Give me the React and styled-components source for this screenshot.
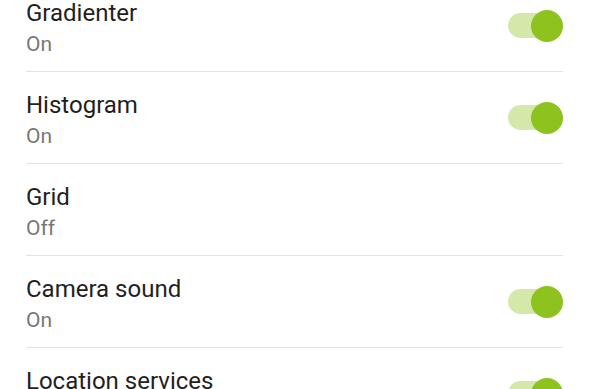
import React from 'react'
import styled, { createGlobalStyle } from 'styled-components'

const GlobalStyle = createGlobalStyle`
  html, body {
    margin: 0;
    padding: 0;
    background: #ffffff;
    overflow: hidden;
  }
  body {
    font-family: Roboto, "Noto Sans", "Liberation Sans", sans-serif;
  }
`;

const List = styled.div`
  display: flex;
  flex-direction: column;
  padding: 0 27px 0 26px;
  margin-top: -20px;
`;

const Row = styled.div`
  display: flex;
  align-items: center;
  justify-content: space-between;
  height: 91px;
  border-bottom: 1px solid #e3e3e3;
`;

const Texts = styled.div`
  display: flex;
  flex-direction: column;
  padding-top: 6px;
`;

const Title = styled.div`
  font-size: 24px;
  line-height: 30px;
  color: #1f1f1f;
`;

const SubTitle = styled.div`
  font-size: 21px;
  line-height: 32px;
  color: #777777;
`;

const Track = styled.span`
  display: inline-flex;
  align-items: center;
  justify-content: flex-end;
  width: 48px;
  height: 25px;
  border-radius: 13px;
  margin-right: 7px;
  background: #d4e8a9;
`;

const Thumb = styled.span`
  display: block;
  width: 32px;
  height: 32px;
  border-radius: 50%;
  margin-right: -7px;
  background: #8dc21f;
`;

const items = [
  { title: 'Gradienter', value: 'On', on: true },
  { title: 'Histogram', value: 'On', on: true },
  { title: 'Grid', value: 'Off', on: false },
  { title: 'Camera sound', value: 'On', on: true },
  { title: 'Location services', value: 'On', on: true },
]

function Toggle() {
  return (
    <Track>
      <Thumb />
    </Track>
  )
}

export default function App() {
  return (
    <>
      <GlobalStyle />
      <List>
        {items.map((it) => (
          <Row key={it.title}>
            <Texts>
              <Title>{it.title}</Title>
              <SubTitle>{it.value}</SubTitle>
            </Texts>
            {it.on && <Toggle />}
          </Row>
        ))}
      </List>
    </>
  )
}
